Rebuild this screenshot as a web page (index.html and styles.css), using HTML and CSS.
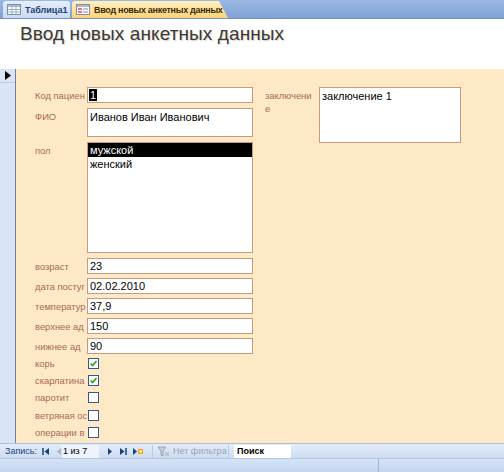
FILE: index.html
```html
<!DOCTYPE html>
<html lang="ru">

<head>
    <meta charset="UTF-8">
    <title>Ввод новых анкетных данных</title>
    <link rel="stylesheet" href="styles.css">
</head>

<body>
    <div class="tabs">
        <div class="tab tabTable">
            <svg width="14" height="11" viewBox="0 0 14 11">
                <rect x="0.5" y="0.5" width="13" height="10" fill="#fff" stroke="#7a8fa8" />
                <rect x="1" y="1" width="12" height="2" fill="#a9bcd6" />
                <path d="M1 5.5H13M1 8H13M5 1V10M9 1V10" stroke="#9aabc2" stroke-width="1" />
            </svg>
            <span>Таблица1</span>
        </div>
        <div class="tab tabForm">
            <svg width="14" height="11" viewBox="0 0 14 11">
                <rect x="0.5" y="0.5" width="13" height="10" fill="#fff" stroke="#8a8aa0" />
                <rect x="1" y="1" width="12" height="2" fill="#b4b8d0" />
                <rect x="2" y="4" width="4" height="2" fill="#e07a8a" />
                <rect x="7" y="4" width="5" height="2" fill="#c0c4d8" />
                <rect x="2" y="7" width="4" height="2" fill="#e07a8a" />
                <rect x="7" y="7" width="5" height="2" fill="#c0c4d8" />
            </svg>
            <span>Ввод новых анкетных данных</span>
        </div>
    </div>

    <div class="header">
        <h1>Ввод новых анкетных данных</h1>
    </div>

    <div class="main">
        <div class="selector">
            <div class="current">
                <svg width="6" height="9" viewBox="0 0 6 9"><path d="M0 0L6 4.5L0 9Z" fill="#000" /></svg>
            </div>
        </div>
        <div class="content">
            <div class="leftCol">
                <div class="row">
                    <div class="label">Код пациен</div>
                    <div class="field"><span class="sel">1</span></div>
                </div>
                <div class="row">
                    <div class="label">ФИО</div>
                    <div class="field tall">Иванов Иван Иванович</div>
                </div>
                <div class="row">
                    <div class="label">пол</div>
                    <div class="field list">
                        <div class="item active">мужской</div>
                        <div class="item">женский</div>
                    </div>
                </div>
                <div class="row">
                    <div class="label">возраст</div>
                    <div class="field">23</div>
                </div>
                <div class="row">
                    <div class="label">дата постуг</div>
                    <div class="field">02.02.2010</div>
                </div>
                <div class="row">
                    <div class="label">температур</div>
                    <div class="field">37,9</div>
                </div>
                <div class="row">
                    <div class="label">верхнее ад</div>
                    <div class="field">150</div>
                </div>
                <div class="row">
                    <div class="label">нижнее ад</div>
                    <div class="field">90</div>
                </div>
                <div class="checks">
                    <div class="checkRow">
                        <div class="label">корь</div>
                        <span class="box checked">
                            <svg width="9" height="9" viewBox="0 0 9 9"><path d="M1.5 4.5L3.5 6.5L7.5 2" stroke="#22a022" stroke-width="1.6" fill="none" /></svg>
                        </span>
                    </div>
                    <div class="checkRow">
                        <div class="label">скарлатина</div>
                        <span class="box checked">
                            <svg width="9" height="9" viewBox="0 0 9 9"><path d="M1.5 4.5L3.5 6.5L7.5 2" stroke="#22a022" stroke-width="1.6" fill="none" /></svg>
                        </span>
                    </div>
                    <div class="checkRow">
                        <div class="label">паротит</div>
                        <span class="box"></span>
                    </div>
                    <div class="checkRow">
                        <div class="label">ветряная ос</div>
                        <span class="box"></span>
                    </div>
                    <div class="checkRow">
                        <div class="label">операции в</div>
                        <span class="box"></span>
                    </div>
                </div>
            </div>
            <div class="rightCol">
                <div class="row">
                    <div class="label wrap">заключени е</div>
                    <div class="field memo">заключение 1</div>
                </div>
            </div>
        </div>
    </div>

    <div class="nav">
        <span class="navLabel">Запись:</span>
        <svg class="navBtn" width="8" height="7" viewBox="0 0 8 7"><path d="M1 0V7" stroke="#1e3f7a" stroke-width="1.5" /><path d="M7 0L2.5 3.5L7 7Z" fill="#1e3f7a" /></svg>
        <svg class="navBtn prev" width="6" height="7" viewBox="0 0 6 7"><path d="M5 0L1 3.5L5 7Z" fill="#a8b4c8" /></svg>
        <span class="recBox">1 из 7</span>
        <svg class="navBtn" width="6" height="7" viewBox="0 0 6 7"><path d="M1 0L5 3.5L1 7Z" fill="#1e3f7a" /></svg>
        <svg class="navBtn" width="8" height="7" viewBox="0 0 8 7"><path d="M1 0L5.5 3.5L1 7Z" fill="#1e3f7a" /><path d="M7 0V7" stroke="#1e3f7a" stroke-width="1.5" /></svg>
        <svg class="navBtn" width="10" height="7" viewBox="0 0 10 7"><path d="M0 0L4 3.5L0 7Z" fill="#1e3f7a" /><rect x="5" y="1" width="5" height="5" fill="#f0a020" /><rect x="6" y="2" width="3" height="3" fill="#ffe080" /></svg>
        <span class="sep"></span>
        <svg class="filterIcon" width="13" height="11" viewBox="0 0 13 11"><path d="M1 1H9L6 5V10L4 9V5Z" fill="#c8d0dc" stroke="#9aa6b8" /><path d="M8 6L12 10M12 6L8 10" stroke="#b8bcc8" stroke-width="1.3" /></svg>
        <span class="noFilter">Нет фильтра</span>
        <span class="sep"></span>
        <span class="search">Поиск</span>
    </div>
    <div class="status">
        <div class="statusPart"></div>
        <div class="statusPart"></div>
    </div>
</body>

</html>
```

FILE: styles.css
```css
body {
    margin: 0;
    width: 504px;
    height: 472px;
    overflow: hidden;
    display: flex;
    flex-direction: column;
    font-family: "Liberation Sans", Arial, sans-serif;
    background: #fff;
}

.tabs {
    height: 19px;
    flex: none;
    display: flex;
    align-items: flex-end;
    gap: 2px;
    padding-left: 3px;
    background: linear-gradient(#9bb8e4, #7fa2d6);
    border-bottom: 1px solid #6f93c9;
    box-sizing: border-box;
}

.tab {
    height: 17px;
    display: flex;
    align-items: center;
    gap: 4px;
    padding-left: 4px;
    font-size: 9px;
    font-weight: bold;
    white-space: nowrap;
    box-sizing: border-box;
}

.tabTable {
    width: 67px;
    background: linear-gradient(#e6eefa, #c9daf2);
    color: #1f3f72;
    border-radius: 3px 3px 0 0;
}

.tabForm {
    width: 156px;
    background: linear-gradient(#fff0c0, #fbd27a);
    color: #3a2a08;
    letter-spacing: -0.3px;
    clip-path: polygon(0 0, calc(100% - 9px) 0, 100% 100%, 0 100%);
    border-radius: 3px 0 0 0;
}

.header {
    height: 50px;
    flex: none;
    background: #fff;
}

.header h1 {
    margin: 0;
    padding: 4px 0 0 20px;
    font-size: 19px;
    font-weight: normal;
    color: #3a3a3a;
    letter-spacing: 0.1px;
    text-shadow: 1px 1px 1px #d8d0c4;
}

.main {
    height: 374px;
    flex: none;
    display: flex;
    background: #fde9c6;
}

.selector {
    width: 15px;
    flex: none;
    background: #d9e5f5;
    border-right: 1px solid #6d7f9a;
}

.current {
    height: 13px;
    display: flex;
    align-items: center;
    padding-left: 5px;
    border-bottom: 1px solid #b9cbe4;
}

.content {
    flex: 1;
    display: flex;
    padding-top: 18px;
}

.leftCol {
    width: 230px;
    flex: none;
    padding-left: 19px;
    display: flex;
    flex-direction: column;
    gap: 4px;
}

.row {
    display: flex;
}

.label {
    width: 52px;
    flex: none;
    font-size: 9.4px;
    color: #a86b58;
    padding-top: 3px;
    white-space: nowrap;
    overflow: hidden;
}

.label.wrap {
    white-space: normal;
    width: 50px;
    line-height: 13px;
    padding-top: 2px;
    padding-right: 4px;
    word-break: break-all;
}

.field {
    width: 166px;
    height: 16px;
    box-sizing: border-box;
    border: 1px solid #c59a80;
    background: #fff;
    font-size: 11px;
    line-height: 14px;
    padding-left: 2px;
    color: #000;
}

.field.tall {
    height: 29px;
    padding-top: 1px;
}

.row:nth-child(2),
.row:nth-child(3),
.row:nth-child(4) {
    margin-top: 1px;
}

.field.list {
    height: 111px;
    padding: 0;
}

.item {
    height: 14px;
    line-height: 14px;
    padding-left: 2px;
}

.item.active {
    background: #000;
    color: #fff;
}

.field.memo {
    width: 142px;
    height: 56px;
    padding-top: 1px;
}

.sel {
    background: #000;
    color: #fff;
    padding: 0 1px;
    margin-left: -1px;
}

.checks {
    display: flex;
    flex-direction: column;
    margin-top: -3px;
}

.checkRow {
    height: 17.2px;
    display: flex;
    align-items: center;
}

.checkRow .label {
    padding-top: 0;
}

.box {
    width: 11px;
    height: 11px;
    box-sizing: border-box;
    margin-left: 1px;
    border: 1px solid #34598a;
    background: #fff;
    display: flex;
    align-items: center;
    justify-content: center;
}

.nav {
    height: 15px;
    flex: none;
    display: flex;
    align-items: center;
    background: linear-gradient(#e3edf9, #cddcf1);
    border-top: 1px solid #a9bfdf;
    font-size: 9px;
    color: #1e3f7a;
    white-space: nowrap;
    box-sizing: border-box;
}

.nav > * {
    flex: none;
}

.navLabel {
    width: 31px;
    padding-left: 5px;
    margin-right: 6px;
}

.navBtn {
    margin-right: 6px;
}

.navBtn.prev {
    margin-right: 0;
}

.recBox {
    width: 36px;
    height: 13px;
    line-height: 13px;
    background: #eef4fc;
    color: #000;
    margin-right: 8px;
    padding-left: 1px;
}

.sep {
    width: 1px;
    height: 13px;
    background: #b8cae4;
    margin: 0 4px 0 3px;
}

.filterIcon {
    margin-right: 3px;
}

.noFilter {
    width: 52px;
    color: #9aa4b4;
}

.search {
    width: 54px;
    height: 13px;
    line-height: 13px;
    background: #fff;
    color: #000;
    font-weight: bold;
    padding-left: 3px;
    margin-left: 1px;
}

.status {
    flex: 1;
    display: flex;
    background: linear-gradient(#d6e3f5, #c4d5ee);
    border-top: 1px solid #b2c6e4;
}

.statusPart {
    width: 378px;
    border-right: 1px solid #9fb4d6;
}

.statusPart:last-child {
    flex: 1;
    border-right: none;
}
```
